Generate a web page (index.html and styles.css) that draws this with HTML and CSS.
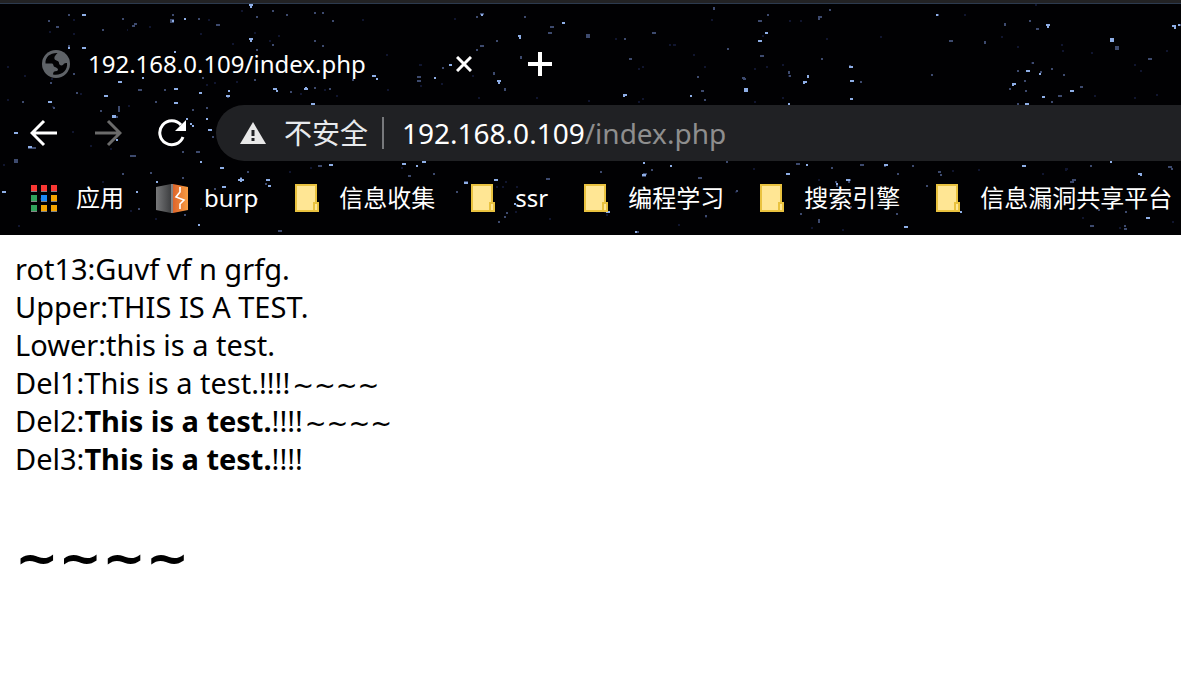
FILE: index.html
```html
<!DOCTYPE html>
<html lang="zh-CN">
<head>
<meta charset="utf-8">
<title>192.168.0.109/index.php</title>
<link rel="stylesheet" href="styles.css">
</head>
<body>
<header class="browser">
  <svg class="stars" aria-hidden="true">
    <path class="dim" d="M73 20h2M208 20h2M241 11h2M127 30h1M149 27h2M49 32h2M73 34h2M7 67h2M24 76h2M7 100h2M51 79h2M52 107h2M128 106h2M80 94h2M200 34h2M206 85h2M214 83h2M232 44h2M236 82h2M254 33h2M269 41h2M278 36h2M362 20h2M386 55h2M387 90h2M336 96h2M324 90h2M300 94h2M420 86h2M441 84h2M419 65h3M454 19h2M472 76h2M536 98h2M478 98h2M588 101h2M615 39h2M669 45h2M673 45h3M693 55h2M638 69h2M642 67h2M638 102h2M642 99h2M702 91h2M704 67h2M711 20h2M754 69h2M754 102h2M762 36h2M766 67h2M782 65h2M788 76h2M789 21h2M782 98h2M800 21h2M826 39h2M880 37h2M964 15h2M1001 37h2M1035 5h2M1017 47h2M1061 45h2M1062 51h2M1031 63h2M1091 53h2M1134 65h2M1140 71h2M1134 98h2M1156 95h2M1166 51h2M1094 96h2M72 132h2M90 146h2M110 149h2M3 165h2M102 182h2M40 199h2M18 226h2M130 211h2M155 219h2M200 209h2M289 172h2M310 168h2M401 168h2M496 187h2M502 187h2M505 182h2M516 187h2M515 212h2M549 219h2M604 212h2M606 215h2M678 225h2M705 217h2M735 192h2M753 169h2M818 180h2M811 228h2M842 230h2M952 171h2M978 170h2M1042 174h2M1066 169h2M1066 168v3M1119 228h2M1172 222h2M1082 218h2"/>
    <path class="mid" d="M48 21h2M68 15h2M56 27h3M102 30h2M68 46h2M122 19h2M132 26h3M134 24h3M170 20h4M170 22h4M172 15h2M198 19h2M216 25h4M256 17h2M272 11h2M286 15h2M314 13h2M322 13h2M332 21h2M272 45h2M314 41h2M256 50h2M322 46h2M22 102h2M50 83h2M73 74h2M76 93h2M118 107h2M118 109h2M100 111h2M138 90h4M142 78h2M155 102h2M164 90h2M192 110h2M202 78h2M227 97h2M206 108h2M254 80h2M290 92h2M314 88h2M329 89h2M352 80h2M376 79h2M480 14h4M476 17h2M524 17h2M550 27h4M548 33h4M586 35h4M586 37h4M480 46h4M476 50h2M442 68h2M417 77h4M417 81h4M496 41h2M494 72v3M505 88v3M521 56v3M624 39h2M629 59h3M652 33h4M714 7v3M767 15h2M758 21h4M727 49h2M697 77h2M742 78h3M701 91h3M704 100h2M743 79h3M760 56h4M789 71v3M789 76h2M818 17h4M818 19h2M829 10h2M821 59h2M850 65v2M861 81v2M931 75h2M937 15h2M949 41h4M985 41v3M1005 23v3M1029 21h2M1036 29h3M1032 63h2M1017 71h2M1040 72h2M1051 69h2M1024 81h2M1009 89h2M1025 91h2M1063 75h2M1080 87h3M1058 96h4M1051 102h2M1115 47h4M1115 49h4M1148 59h4M1179 25h2M1017 104h2M14 160h4M14 162h4M28 148h8M53 108h2M130 156h6M118 111h2M114 117h4M122 174h2M138 209h2M182 178h2M182 152h2M184 192h2M196 152h4M212 137h2M214 189h2M240 178h2M150 173h2M184 215h2M247 172h2M265 184h2M256 199h2M278 231h4M297 203h2M318 166h4M408 176h3M433 174h2M464 182h4M456 192h2M546 179h4M506 213h2M504 217h2M498 222h2M600 172h2M635 232h4M651 170h2M643 174h4M642 176h4M698 178h4M726 162h2M736 191h2M705 216h2M796 164h4M831 168h2M848 180h3M835 182h2M836 186h2M848 182h2M860 165h4M897 174h2M884 166h2M912 166h2M938 172h3M940 175h2M926 186h2M1072 180h4M1070 182h4M1110 161h2M1090 166h2M818 220h2M818 222h2M850 207h2M800 214h2M896 214h2M1090 226h4M1124 226h2M1124 229h3M1125 212h2M1098 210h2M1168 167h4M1171 169h2M1112 209h2"/>
    <path class="bright" d="M82 15h4M249 5h4M250 7h2M68 48h2M82 48h4M184 19h2M172 21h2M249 39h4M250 41h2M174 52h2M118 82h4M142 78h2M48 102h4M104 96h4M112 117h4M174 89h4M199 93h3M174 103h4M186 119h2M226 96h4M228 91h2M273 89h4M276 91h2M304 89h4M305 88h2M311 104h4M372 76h4M376 79h2M481 15h2M562 23h3M518 36h3M519 38h2M434 78h2M449 65h3M497 81h4M498 83h2M623 95h4M624 94v3M765 33h3M758 41h4M744 89h4M744 91h4M690 96h2M788 104h2M808 75v3M803 82h4M804 81v3M849 67h4M850 81h4M850 99h3M936 15h2M1046 25h4M1047 27h2M1110 39h4M1110 41h4M1172 26h4M1174 28h2M1026 71h4M1039 74h2M1012 84h4M1013 83v3M1070 91h4M1042 97h3M1025 104h4M1178 25h2M14 133h4M28 147h4M112 116h4M116 140h2M190 124h2M192 126h2M206 119h2M208 130h4M200 162h2M220 168h4M238 180h6M241 178v4M2 192h4M136 192h2M156 182h2M222 187h4M266 180h4M268 186h3M198 225h2M329 165h4M402 164h4M416 166h2M422 162h4M494 180h4M464 183h4M514 204h2M644 162v2M670 166h2M642 175h4M606 212h4M786 174h4M806 165h2M884 165h4M846 180h4M836 184h2M904 227h4M1022 166h4M1110 162h2M1138 174h4M1141 173v3M1146 218h4M960 212h2M635 232h2"/>
  </svg>
  <div class="frame"></div>
  <div class="tabs">
    <svg class="globe" viewBox="0 0 28 28" aria-hidden="true"><circle cx="14" cy="14" r="14" fill="#5f6368"/><path d="M3.5 13.5C3 7 8 2.8 15.5 3C14 5 12 6 12.5 9C13 11 17 10 17 13C17 15 19 16 21 15C22 13 24 13 25 13C26 20 20 26 11 24.5C11 22 12 21 15 21C17 20 16 18 13 17C11 17 12 14 10 13.5Z" fill="#020204"/></svg>
    <span class="tab-title">192.168.0.109/index.php</span>
    <button class="close" aria-label="Close tab"><svg viewBox="0 0 16 16"><path d="M1 1L15 15M15 1L1 15"/></svg></button>
    <button class="new" aria-label="New tab"><svg viewBox="0 0 24 24"><path d="M12 0V24M0 12H24"/></svg></button>
  </div>
  <div class="toolbar">
    <button class="nav" aria-label="Back"><svg viewBox="0 0 28 28"><path d="M27 14H2M14 2L2 14L14 26"/></svg></button>
    <button class="nav off" aria-label="Forward"><svg viewBox="0 0 28 28"><path d="M1 14H26M14 2L26 14L14 26"/></svg></button>
    <button class="nav" aria-label="Reload"><svg viewBox="0 0 28 28"><path d="M23 6A12 12 0 1 0 25 18"/><path class="solid" d="M28 1V12H17Z"/></svg></button>
    <div class="address">
      <svg class="warn" viewBox="0 0 26 22" aria-hidden="true"><path d="M13 0L26 22H0Z" fill="#e8e8e8"/><path d="M13 8V14M13 16V19" stroke="#202124" stroke-width="3"/></svg>
      <span class="security">不安全</span>
      <span class="divider"></span>
      <a class="url" href="#">192.168.0.109<span class="path">/index.php</span></a>
    </div>
  </div>
  <nav class="bookmarks">
    <a class="apps" href="#"><svg viewBox="0 0 27 27" aria-hidden="true"><path fill="#858585" d="M0 1h6v6H0zM10 1h6v6h-6zM20 1h6v6h-6zM0 11h6v6H0zM10 11h6v6h-6zM20 11h6v6h-6zM0 21h6v6H0zM10 21h6v6h-6zM20 21h6v6h-6z"/><path fill="#f93834" d="M0 0h6v6H0zM10 0h6v6h-6zM20 0h6v6h-6z"/><path fill="#31a35c" d="M0 10h6v6H0zM0 20h6v6H0z"/><path fill="#1c89f5" d="M10 10h6v6h-6z"/><path fill="#f6a500" d="M20 10h6v6h-6zM10 20h6v6h-6zM20 20h6v6h-6z"/></svg>应用</a>
    <a class="burp" href="#"><svg viewBox="0 0 32 29" aria-hidden="true"><defs><linearGradient id="side"><stop stop-color="#77787a"/><stop offset="1" stop-color="#3d3e40"/></linearGradient><linearGradient id="front"><stop stop-color="#dd642b"/><stop offset="1" stop-color="#f99e42"/></linearGradient></defs><path d="M0 3L15 0V29L0 26Z" fill="url(#side)"/><path d="M15 0H17V29H15Z" fill="#858585"/><path d="M17 0L32 3V26L17 29Z" fill="url(#front)"/><path d="M24 3V8L20 13L28 16L24 20V25" fill="none" stroke="#fff" stroke-width="1.6"/></svg>burp</a>
    <a href="#"><svg viewBox="0 0 24 28" aria-hidden="true"><path class="paper" d="M1 1H21V27H1Z"/><path class="paper" d="M19 19H23V27H19Z"/></svg>信息收集</a>
    <a href="#"><svg viewBox="0 0 24 28" aria-hidden="true"><path class="paper" d="M1 1H21V27H1Z"/><path class="paper" d="M19 19H23V27H19Z"/></svg>ssr</a>
    <a href="#"><svg viewBox="0 0 24 28" aria-hidden="true"><path class="paper" d="M1 1H21V27H1Z"/><path class="paper" d="M19 19H23V27H19Z"/></svg>编程学习</a>
    <a href="#"><svg viewBox="0 0 24 28" aria-hidden="true"><path class="paper" d="M1 1H21V27H1Z"/><path class="paper" d="M19 19H23V27H19Z"/></svg>搜索引擎</a>
    <a href="#"><svg viewBox="0 0 24 28" aria-hidden="true"><path class="paper" d="M1 1H21V27H1Z"/><path class="paper" d="M19 19H23V27H19Z"/></svg>信息漏洞共享平台</a>
  </nav>
</header>
<main class="output">
  <p>rot13:Guvf vf n grfg.</p>
  <p>Upper:THIS IS A TEST.</p>
  <p>Lower:this is a test.</p>
  <p>Del1:This is a test.!!!!<span class="tilde">~~~~</span></p>
  <p>Del2:<b>This is a test.</b>!!!!<span class="tilde">~~~~</span></p>
  <p>Del3:<b>This is a test.</b>!!!!</p>
  <h1>~~~~</h1>
</main>
</body>
</html>
```
FILE: styles.css
```css
* { box-sizing: border-box; }
body { margin: 0; background: #fff; color: #000; font-family: "Noto Sans", "Noto Sans CJK SC", sans-serif; overflow-x: hidden; }
button { display: flex; padding: 0; border: 0; background: none; color: #fff; }
a { color: inherit; text-decoration: none; }
svg { flex: none; }
.browser { position: relative; overflow: hidden; background: #010103; color: #fff; }
.browser > div, .browser > nav { position: relative; }
.stars { position: absolute; top: 0; left: 0; width: 100%; height: 100%; }
.stars path { fill: none; stroke-width: 2; }
.dim { stroke: #10152f; }
.mid { stroke: #3d4a6e; }
.bright { stroke: #8eaee6; }
.frame { height: 4px; background: #222224; border-bottom: 1px solid #2c3a4e; }

.tabs { display: flex; align-items: center; height: 101px; padding: 18px 42px 0; }
.globe { width: 28px; height: 28px; }
.tab-title { width: 386px; padding-left: 18px; font-size: 24px; line-height: 32px; white-space: nowrap; }
.close svg { width: 16px; height: 16px; }
.new { margin-left: 56px; }
.new svg { width: 24px; height: 24px; }
.close path, .new path { fill: none; stroke: #fff; stroke-width: 3; }
.new path { stroke-width: 4; }

.toolbar { display: flex; align-items: center; gap: 36px; height: 56px; padding-left: 30px; }
.nav svg { width: 28px; height: 28px; }
.nav path { fill: none; stroke: #fff; stroke-width: 3; }
.nav .solid { fill: #fff; stroke: none; }
.off path { stroke: #6b6b6b; }
.address { display: flex; flex: 1; align-items: center; height: 56px; margin-left: -6px; padding-left: 24px; border-radius: 28px 0 0 28px; background: #202124; font-size: 28px; line-height: 36px; white-space: nowrap; }
.warn { width: 26px; height: 22px; }
.security { margin-left: 18px; color: #e8eaed; }
.divider { width: 2px; height: 32px; margin: 0 18px 0 14px; background: #77797c; }
.path { color: #8e8e8e; }

.bookmarks { display: flex; align-items: center; gap: 36px; height: 74px; padding-left: 31px; font-size: 24px; line-height: 32px; white-space: nowrap; }
.bookmarks a { display: flex; align-items: center; gap: 20px; }
.bookmarks svg { width: 24px; height: 28px; }
.bookmarks .apps { gap: 18px; margin-right: -4px; }
.bookmarks .apps svg { width: 27px; height: 27px; }
.bookmarks .burp { gap: 16px; margin-right: 1px; }
.bookmarks .burp svg { width: 32px; height: 29px; }
.paper { fill: #ffe694; stroke: #e9c23f; stroke-width: 2; }

.output { padding: 15px; font-size: 29px; line-height: 38px; }
.output p { margin: 0; }
.tilde { padding-left: 2px; font-family: "DejaVu Sans", sans-serif; font-size: 26px; line-height: 24px; }
.output h1 { margin: 40px 0 0; font: bold 52px/80px "DejaVu Sans", sans-serif; }
```
